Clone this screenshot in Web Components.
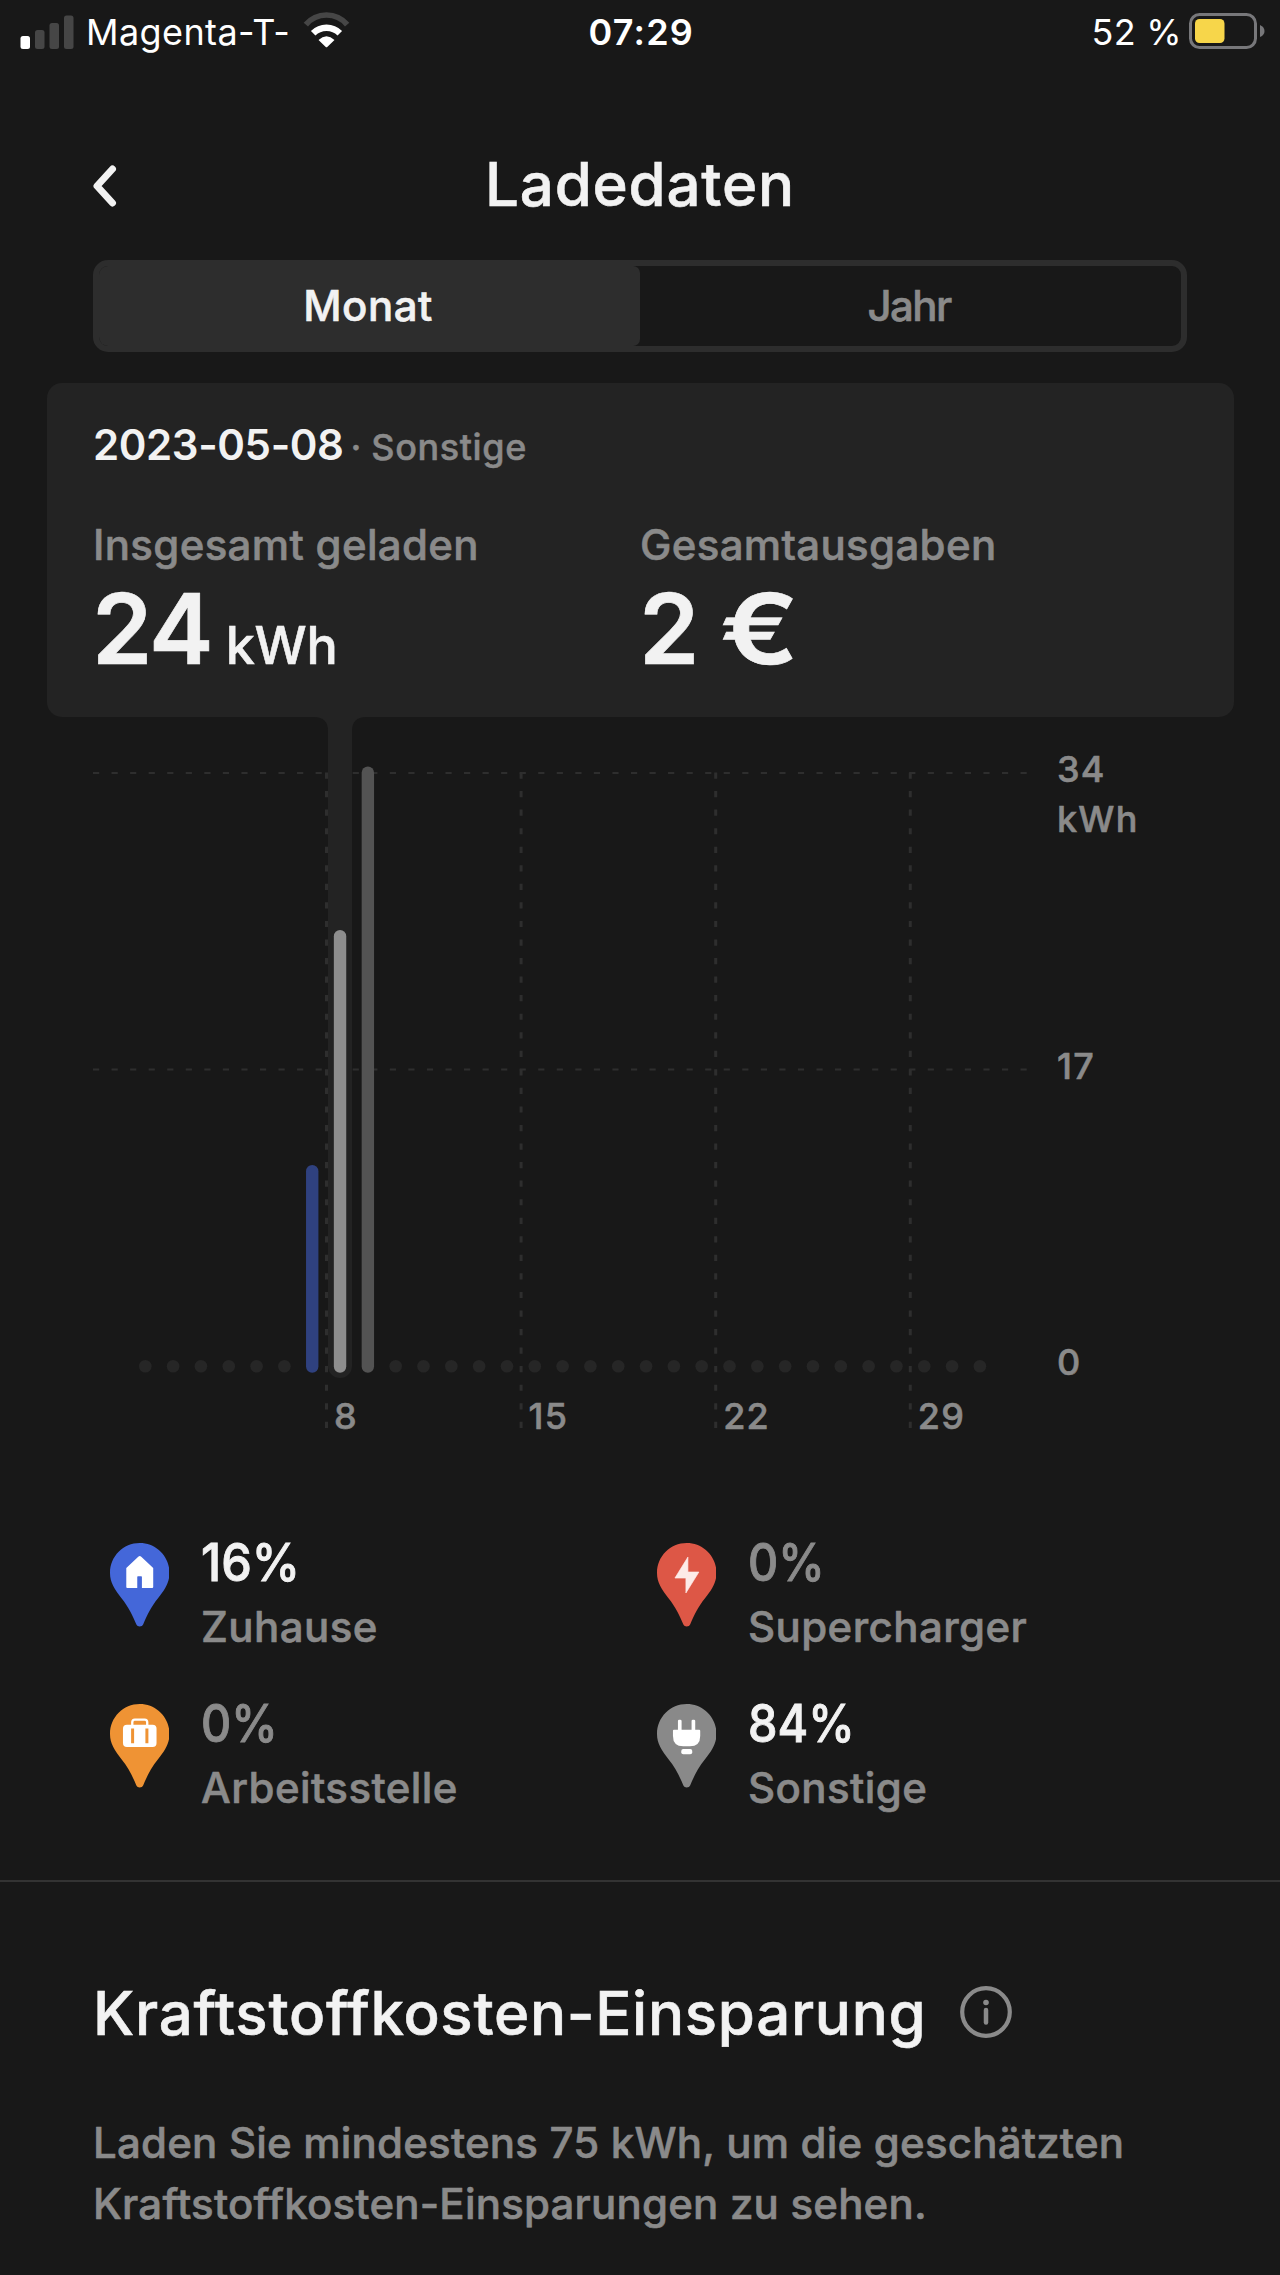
<!DOCTYPE html>
<html lang="de">
<head>
<meta charset="utf-8">
<title>Ladedaten</title>
<style>
  body {
    margin: 0;
    background: #181818;
    color: #f2f2f2;
    font-family: Inter, "Liberation Sans", sans-serif;
    font-weight: 500;
    /* a touch heavier than medium */
    -webkit-text-stroke: 0.6px currentColor;
    --muted: #8a8a8a;
    --panel: #232323;
    --control: #2d2d2d;
  }
</style>
</head>
<body>
<charging-screen></charging-screen>

<script>
class StatusBar extends HTMLElement {
  constructor() {
    super();
    this.attachShadow({ mode: 'open' });
  }

  connectedCallback() {
    this.shadowRoot.innerHTML = `
      <style>
        :host {
          display: grid;
          grid-template-columns: 1fr auto 1fr;
          align-items: center;
          height: 64px;
          padding: 0 15.5px 0 20px;
          font-size: 36px;
          font-weight: 400;
          color: #fff;
          -webkit-text-stroke: 0;
        }
        .side { display: flex; align-items: center; }
        .right { justify-content: flex-end; }
        svg { display: block; flex: none; }
        .bars { margin-top: -1px; }
        .carrier { margin-left: 12px; letter-spacing: 0.4px; white-space: nowrap; }
        .wifi { margin: -4px 0 0 13px; }
        .time { font-weight: 600; letter-spacing: 1.2px; margin-right: 2px; }
        .battery-text { letter-spacing: 0.3px; margin-right: 6.5px; white-space: nowrap; }
        .battery { margin-top: -3px; }
      </style>
      <div class="side">
        <svg class="bars" width="54" height="34" viewBox="0 0 54 34">
          <rect x="0.5" y="21" width="9.5" height="13" rx="2.5" fill="#fff"/>
          <g fill="#464646">
            <rect x="15" y="15" width="9.5" height="19" rx="2.5"/>
            <rect x="29.5" y="8" width="9.5" height="26" rx="2.5"/>
            <rect x="44" y="0.5" width="9.5" height="33.5" rx="2.5"/>
          </g>
        </svg>
        <span class="carrier">${this.getAttribute('carrier')}</span>
        <svg class="wifi" width="47" height="35.3" viewBox="0 0 140 106" fill="none">
          <path d="M8 38 A81 81 0 0 1 132 38" stroke="#464646" stroke-width="17"/>
          <path d="M30 64 A56 56 0 0 1 110 64" stroke="#fff" stroke-width="19"/>
          <path d="M46 84 Q70 62 94 84 L73 104 Q70 107 67 104 Z" fill="#fff"/>
        </svg>
      </div>
      <span class="time">${this.getAttribute('time')}</span>
      <div class="side right">
        <span class="battery-text">${this.getAttribute('battery')} %</span>
        <svg class="battery" width="76" height="36" viewBox="0 0 76 36">
          <rect x="1.5" y="1.5" width="65" height="33" rx="9" fill="none" stroke="#77777a" stroke-width="3"/>
          <rect x="6" y="6" width="29.5" height="24" rx="4.5" fill="#f7d64a"/>
          <path d="M71 12 Q75.5 14 75.5 18 T71 24 Z" fill="#77777a"/>
        </svg>
      </div>
    `;
  }
}

class PageHeader extends HTMLElement {
  constructor() {
    super();
    this.attachShadow({ mode: 'open' });
    this.shadowRoot.innerHTML = `
      <style>
        :host {
          display: grid;
          grid-template-columns: 60px 1fr 60px;
          align-items: center;
          height: 80px;
          margin: 80px 93px 0;
        }
        svg { display: block; margin-top: 4px; }
        h1 {
          margin: 0;
          font-size: 60px;
          font-weight: inherit;
          line-height: 80px;
          letter-spacing: 0.8px;
          text-align: center;
        }
      </style>
      <svg width="26" height="44" viewBox="0 0 26 44" fill="none" stroke="#f2f2f2" stroke-width="7" stroke-linecap="round" stroke-linejoin="round">
        <path d="M19.5 5 L4 22 L19.5 39"/>
      </svg>
      <h1><slot></slot></h1>
    `;
  }
}

class SegmentedControl extends HTMLElement {
  constructor() {
    super();
    this.attachShadow({ mode: 'open' });
  }

  connectedCallback() {
    const options = this.getAttribute('options').split(',');
    const selected = this.getAttribute('selected');
    this.shadowRoot.innerHTML = `
      <style>
        :host {
          display: flex;
          box-sizing: border-box;
          height: 92.5px;
          margin: 35.5px 93px 0;
          border: 6px solid var(--control);
          border-radius: 15px;
          overflow: hidden;
        }
        button {
          flex: 1;
          padding: 0 3px 1px 0;
          border: none;
          background: none;
          color: var(--muted);
          font: inherit;
          font-size: 42px;
          letter-spacing: -1.6px;
          -webkit-text-stroke: inherit;
        }
        button.selected {
          background: var(--control);
          border-radius: 0 7px 7px 0;
          color: #f2f2f2;
          letter-spacing: 0.5px;
        }
      </style>
      ${options.map(o => `<button class="${o === selected ? 'selected' : ''}">${o}</button>`).join('')}
    `;
  }
}

class DayDetails extends HTMLElement {
  constructor() {
    super();
    this.attachShadow({ mode: 'open' });
    this.shadowRoot.innerHTML = `
      <style>
        :host {
          display: block;
          box-sizing: border-box;
          height: 334px;
          margin: 31px 46.5px 0;
          padding: 37px 46.5px 0;
          border-radius: 15px;
          background: var(--panel);
        }
        .heading {
          display: flex;
          align-items: baseline;
          gap: 7px;
          height: 50px;
          line-height: 50px;
          font-size: 42px;
          font-weight: 600;
          letter-spacing: -0.4px;
          -webkit-text-stroke: 0;
        }
        .place {
          font-size: 36px;
          font-weight: 500;
          letter-spacing: 0.6px;
          word-spacing: -1px;
          color: var(--muted);
          -webkit-text-stroke: 0.5px var(--muted);
        }
        .totals {
          display: grid;
          grid-template-columns: 1fr 1fr;
          margin-top: 50px;
        }
      </style>
      <div class="heading">
        <slot name="date"></slot>
        <span class="place">· <slot name="place"></slot></span>
      </div>
      <div class="totals"><slot></slot></div>
    `;
  }
}

class TotalValue extends HTMLElement {
  constructor() {
    super();
    this.attachShadow({ mode: 'open' });
  }

  connectedCallback() {
    const unit = this.getAttribute('unit') || '';
    const value = this.getAttribute('value').replace('€', '<span class="currency">€</span>');
    this.shadowRoot.innerHTML = `
      <style>
        :host { display: block; }
        .label {
          font-size: 42px;
          line-height: 50px;
          letter-spacing: 0.33px;
          color: var(--muted);
        }
        .value {
          display: flex;
          align-items: baseline;
          gap: 14px;
          height: 96px;
          margin: 10.5px 0 0 -1px;
          font-size: 97px;
          font-weight: 600;
          line-height: 96px;
          letter-spacing: -1.9px;
        }
        .currency {
          display: inline-block;
          transform: scaleX(1.2);
          transform-origin: left;
        }
        .unit {
          font-size: 52px;
          font-weight: 500;
          letter-spacing: -0.2px;
        }
      </style>
      <div class="label">${this.getAttribute('label')}</div>
      <div class="value">
        <span>${value}</span>
        ${unit ? `<span class="unit">${unit}</span>` : ''}
      </div>
    `;
  }
}

class ChargeChart extends HTMLElement {
  constructor() {
    super();
    this.attachShadow({ mode: 'open' });
  }

  connectedCallback() {
    this.render();
  }

  dayX(day) {
    return 145.3 + (day - 1) * 27.82;
  }

  render() {
    const base = 649.3;
    // top is the y of the rounded end of each bar
    const bars = [
      { day: 7, top: 448, color: '#2f417f' },
      { day: 8, top: 213, color: '#8e8e8e' },
      { day: 9, top: 49.5, color: '#535353' }
    ];
    const charged = bars.map(b => b.day);

    let dots = '';
    for (let day = 1; day <= 31; day++) {
      if (!charged.includes(day)) {
        dots += `<circle cx="${this.dayX(day)}" cy="${base}" r="6.3"/>`;
      }
    }

    const rows = [56, 352.5].map(y => `<path d="M93 ${y} H1030" stroke-width="2"/>`).join('');
    const weeks = [8, 15, 22, 29].map((day, i) => ({ day, x: 326.5 + i * 194.6 }));
    const columns = weeks.map(w => `<path d="M${w.x} 55.5 V711" stroke-width="3"/>`).join('');

    this.shadowRoot.innerHTML = `
      <style>
        :host { display: block; height: 763px; -webkit-text-stroke: 0; }
        svg { display: block; }
        text {
          font-size: 36px;
          fill: var(--muted);
          stroke: var(--muted);
          stroke-width: 0.6px;
          letter-spacing: 1.2px;
        }
      </style>
      <svg width="1280" height="763" viewBox="0 0 1280 763">
        <g stroke="#2e2e2e" stroke-dasharray="6.2 12.35" fill="none">${rows}${columns}</g>
        <g fill="#262626">${dots}</g>
        <path fill="#232323" d="M314 -1 V0 Q328 0 328 14 V649 A12 12 0 0 0 352 649 V14 Q352 0 366 0 V-1 Z"/>
        ${bars.map(b => `<rect x="${this.dayX(b.day) - 6.2}" y="${b.top}" width="12.4" height="${655.8 - b.top}" rx="6.2" fill="${b.color}"/>`).join('')}
        ${weeks.map(w => `<text x="${w.x + 7.5}" y="711.5">${w.day}</text>`).join('')}
        <text x="1057" y="65">34</text>
        <text x="1057" y="114.5">kWh</text>
        <text x="1057" y="361.5">17</text>
        <text x="1057" y="658.2">0</text>
      </svg>
    `;
  }
}

const PIN_ICONS = {
  home: {
    color: '#4467d9',
    art: `<path fill="#fff" d="M85 41 Q89.5 36 94 41 L130 75 V132 Q130 135 127 135 H96 V102 Q96 100 94 100 H84 Q82 100 82 102 V135 H52 Q49 135 49 132 V75 Z"/>`
  },
  work: {
    color: '#ef9334',
    art: `<rect x="67" y="46.5" width="45" height="30" rx="8" fill="none" stroke="#fff" stroke-width="7"/>
      <rect x="39" y="62" width="101" height="67" rx="12" fill="#fff"/>
      <path d="M68 73 V118 M111 73 V118" stroke="#ef9334" stroke-width="9"/>`
  },
  supercharger: {
    color: '#dd5746',
    art: `<path fill="#fdebe8" stroke="#fdebe8" stroke-width="2" stroke-linejoin="round" d="M93 42 L54 105 H87 V150 L126 87 H93 Z"/>`
  },
  other: {
    color: '#898989',
    art: `<g fill="#fff"><rect x="63" y="47" width="11" height="35" rx="4"/><rect x="104" y="47" width="11" height="35" rx="4"/>
      <path d="M51 77 H127 Q130 77 130 80 V96 Q130 127 99 127 H79 Q48 127 48 96 V80 Q48 77 51 77 Z"/>
      <rect x="73" y="135" width="33" height="16" rx="6"/></g>`
  }
};

class PlaceShare extends HTMLElement {
  constructor() {
    super();
    this.attachShadow({ mode: 'open' });
  }

  connectedCallback() {
    const icon = PIN_ICONS[this.getAttribute('icon')];
    const share = this.getAttribute('share');
    this.shadowRoot.innerHTML = `
      <style>
        :host { display: flex; gap: 32px; padding-left: 16.5px; }
        svg { display: block; flex: none; margin-top: 10px; }
        .share {
          font-size: 52px;
          line-height: 60px;
          transform: scaleX(${share === '16' ? 0.935 : 0.9});
          transform-origin: left;
          -webkit-text-stroke-width: 0.9px;
        }
        .share.zero { color: var(--muted); }
        .name {
          margin-top: 9px;
          font-size: 42px;
          line-height: 50px;
          letter-spacing: 0.42px;
          color: var(--muted);
        }
      </style>
      <svg width="59.5" height="84" viewBox="0 0 179 252">
        <path fill="${icon.color}" d="M89.5 0 C40 0 0 40 0 90 C0 118 14 140 34 165 C56 192 68 218 79 244 C83 253 96 253 100 244 C111 218 123 192 145 165 C165 140 179 118 179 90 C179 40 139 0 89.5 0 Z"/>
        ${icon.art}
      </svg>
      <div>
        <div class="share ${share === '0' ? 'zero' : ''}">${share}%</div>
        <div class="name"><slot></slot></div>
      </div>
    `;
  }
}

class SavingsSection extends HTMLElement {
  constructor() {
    super();
    this.attachShadow({ mode: 'open' });
    this.shadowRoot.innerHTML = `
      <style>
        :host {
          display: block;
          padding: 95px 93px 0;
          border-top: 2px solid #333;
        }
        .heading { display: flex; align-items: center; gap: 34px; }
        h2 {
          margin: 0;
          font-size: 60px;
          font-weight: inherit;
          line-height: 72px;
          letter-spacing: 0.72px;
          white-space: nowrap;
        }
        svg { display: block; margin-top: -2px; }
        p {
          margin: 62.5px 0 0;
          font-size: 42px;
          line-height: 61.5px;
          letter-spacing: 0.2px;
          color: var(--muted);
        }
      </style>
      <div class="heading">
        <h2><slot name="title"></slot></h2>
        <svg width="52" height="52" viewBox="0 0 52 52">
          <circle cx="26" cy="26" r="23.8" fill="none" stroke="#8a8a8a" stroke-width="4.2"/>
          <circle cx="26" cy="16.5" r="2.8" fill="#8a8a8a"/>
          <path d="M26 24 V36.5" stroke="#8a8a8a" stroke-width="4.5" stroke-linecap="round"/>
        </svg>
      </div>
      <p><slot></slot></p>
    `;
  }
}

class ChargingScreen extends HTMLElement {
  constructor() {
    super();
    this.attachShadow({ mode: 'open' });
    this.shadowRoot.innerHTML = `
      <style>
        :host {
          display: block;
          width: 1280px;
          height: 2275px;
          overflow: hidden;
        }
        .places {
          display: grid;
          grid-template-columns: 1fr 1fr;
          grid-auto-rows: 119px;
          row-gap: 42px;
          margin: 53px 93px 67px;
        }
      </style>
      <status-bar carrier="Magenta-T-" time="07:29" battery="52"></status-bar>
      <page-header>Ladedaten</page-header>
      <segmented-control options="Monat,Jahr" selected="Monat"></segmented-control>
      <day-details>
        <span slot="date">2023-05-08</span>
        <span slot="place">Sonstige</span>
        <total-value label="Insgesamt geladen" value="24" unit="kWh"></total-value>
        <total-value label="Gesamtausgaben" value="2 €"></total-value>
      </day-details>
      <charge-chart></charge-chart>
      <div class="places">
        <place-share icon="home" share="16">Zuhause</place-share>
        <place-share icon="supercharger" share="0">Supercharger</place-share>
        <place-share icon="work" share="0">Arbeitsstelle</place-share>
        <place-share icon="other" share="84">Sonstige</place-share>
      </div>
      <savings-section>
        <span slot="title">Kraftstoffkosten-Einsparung</span>
        Laden Sie mindestens 75 kWh, um die geschätzten Kraftstoffkosten-Einsparungen zu sehen.
      </savings-section>
    `;
  }
}

customElements.define('status-bar', StatusBar);
customElements.define('page-header', PageHeader);
customElements.define('segmented-control', SegmentedControl);
customElements.define('day-details', DayDetails);
customElements.define('total-value', TotalValue);
customElements.define('charge-chart', ChargeChart);
customElements.define('place-share', PlaceShare);
customElements.define('savings-section', SavingsSection);
customElements.define('charging-screen', ChargingScreen);
</script>
</body>
</html>
